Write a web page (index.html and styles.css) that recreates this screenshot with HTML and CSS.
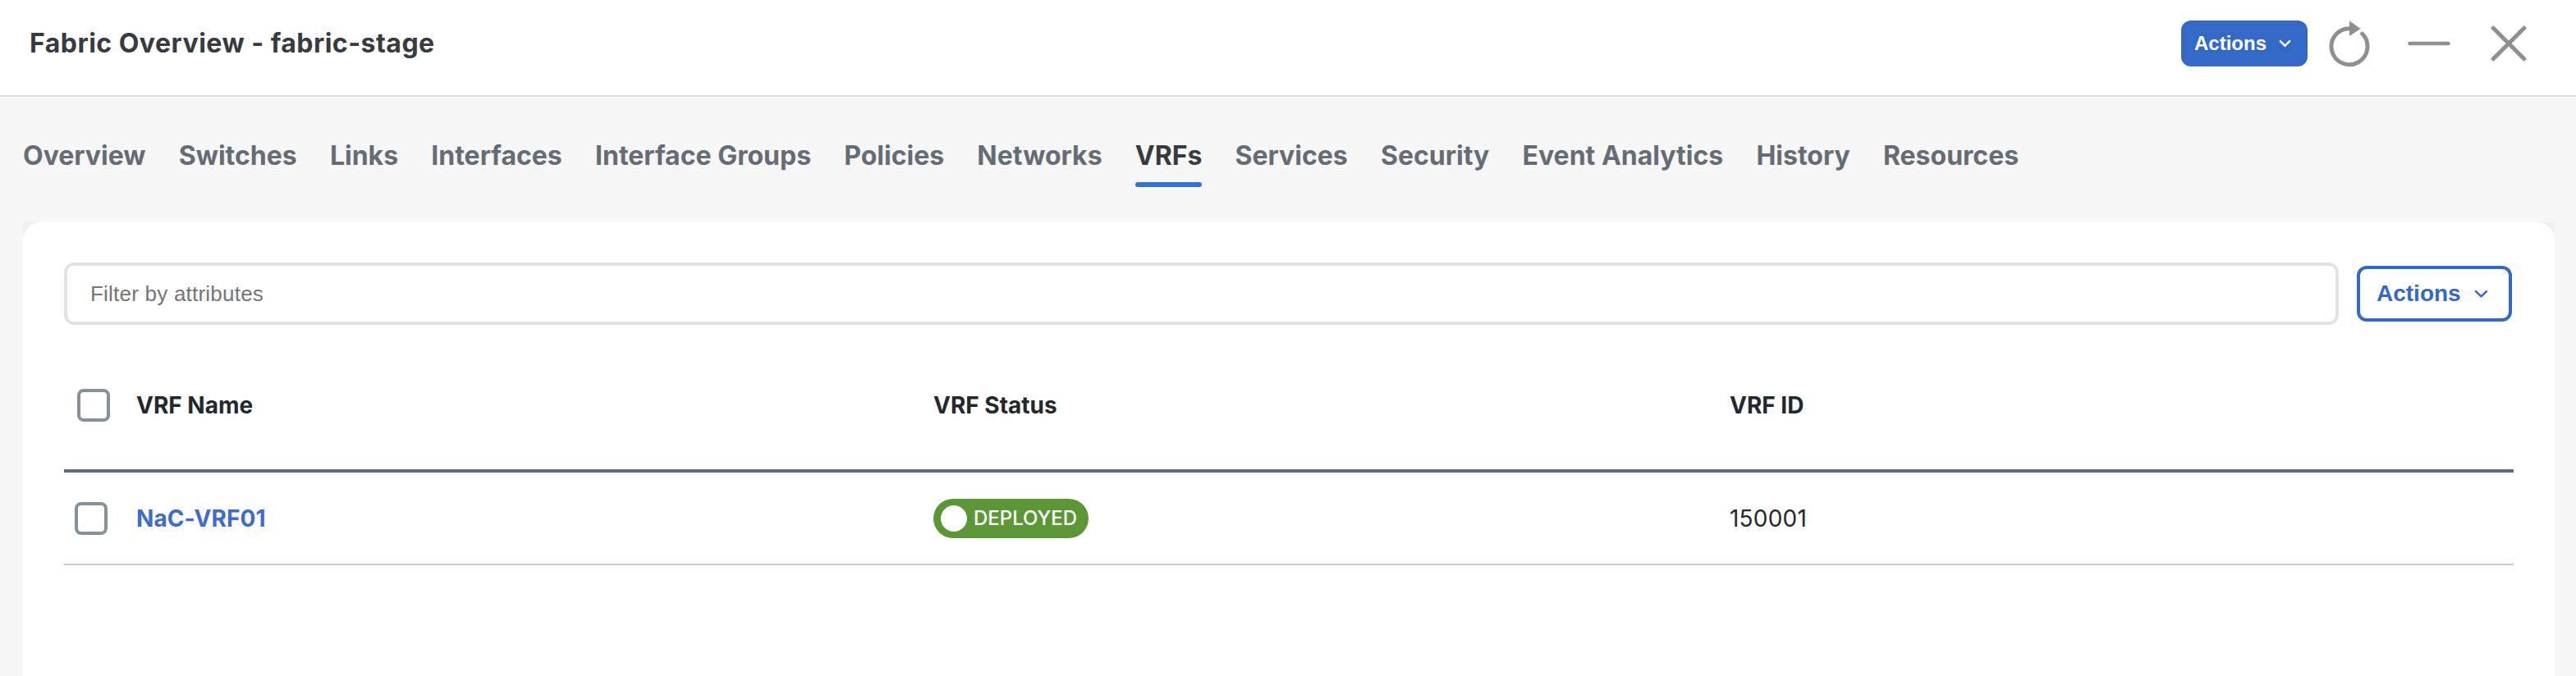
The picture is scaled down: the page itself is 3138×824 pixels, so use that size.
FILE: index.html
```html
<!DOCTYPE html>
<html lang="en">
<head>
<meta charset="utf-8">
<title>Fabric Overview - fabric-stage</title>
<link rel="stylesheet" href="styles.css">
</head>
<body>
<header class="header">
  <h1 class="title">Fabric Overview - fabric-stage</h1>
  <button class="btn btn-primary">Actions
    <svg width="16" height="10" viewBox="0 0 16 10"><path d="M2 2l6 6 6-6"/></svg>
  </button>
  <svg class="icon refresh" width="50" height="58" viewBox="0 0 50 58"><path d="M25 9.700a22 22 0 1 0 15.500 6.400"/><path class="solid" d="M25 0.500l13.500 9.500L25 19z"/></svg>
  <svg class="icon minimize" width="52" height="6" viewBox="0 0 52 6"><path d="M2.500 3h47"/></svg>
  <svg class="icon close" width="44" height="44" viewBox="0 0 44 44"><path d="M3.200 3.200l37.600 37.600M40.800 3.200L3.200 40.800"/></svg>
</header>
<nav class="tabs">
  <a class="tab">Overview</a>
  <a class="tab">Switches</a>
  <a class="tab">Links</a>
  <a class="tab">Interfaces</a>
  <a class="tab">Interface Groups</a>
  <a class="tab">Policies</a>
  <a class="tab">Networks</a>
  <a class="tab active">VRFs</a>
  <a class="tab">Services</a>
  <a class="tab">Security</a>
  <a class="tab">Event Analytics</a>
  <a class="tab">History</a>
  <a class="tab">Resources</a>
</nav>
<div class="panel-wrap">
<main class="panel">
  <div class="toolbar">
    <input class="filter" type="text" placeholder="Filter by attributes">
    <button class="btn btn-outline">Actions
      <svg width="18" height="11" viewBox="0 0 18 11"><path d="M2.200 2l6.800 6.600L15.800 2"/></svg>
    </button>
  </div>
  <div class="row row-head">
    <span class="check"></span>
    <span>VRF Name</span>
    <span>VRF Status</span>
    <span>VRF ID</span>
  </div>
  <div class="row row-body">
    <span class="check"></span>
    <a class="link">NaC-VRF01</a>
    <span class="badge"><i class="dot"></i><span class="badge-text">DEPLOYED</span></span>
    <span class="vrf-id">150001</span>
  </div>
</main>
</div>
</body>
</html>
```
FILE: styles.css
```css
* { box-sizing: border-box; }
body {
  margin: 0;
  height: 824px;
  overflow: hidden;
  display: flex;
  flex-direction: column;
  background: #f7f7f7;
  color: #23282e;
  font-family: Inter, "Liberation Sans", sans-serif;
}
.header {
  height: 118px;
  flex: none;
  display: flex;
  align-items: flex-start;
  padding: 25px 60px 0 36px;
  background: #fff;
  border-bottom: 2px solid #dedede;
}
.title {
  flex: 1;
  margin: 8px 0 0;
  font-size: 32px;
  line-height: 40px;
  font-weight: 700;
  letter-spacing: 0.48px;
  color: #373a40;
}
.btn {
  display: flex;
  align-items: center;
  border-radius: 12px;
  font-family: "Liberation Sans", Arial, sans-serif;
  font-weight: 700;
}
.btn svg {
  fill: none;
  stroke: currentColor;
  stroke-width: 2.7;
  stroke-linecap: round;
  stroke-linejoin: round;
}
.btn-primary {
  width: 154px;
  height: 56px;
  padding: 0 0 0 16px;
  gap: 15px;
  border: 0;
  background: #3468c6;
  color: #fff;
  font-size: 24px;
}
.btn-primary svg { width: 15px; }
.icon {
  flex: none;
  fill: none;
  stroke: #8f8f8f;
  stroke-width: 5;
  stroke-linecap: round;
}
.icon .solid { fill: #8f8f8f; stroke: none; }
.refresh { margin-left: 26px; }
.minimize { margin: 25px 0 0 46px; stroke-width: 4.5; }
.close { margin: 6px 0 0 49px; }
.tabs {
  flex: none;
  height: 152px;
  display: flex;
  align-items: flex-start;
  gap: 40.2px;
  padding: 52px 28px 0;
}
.tab {
  height: 58px;
  font-size: 32px;
  line-height: 40px;
  font-weight: 700;
  color: #656c75;
  white-space: nowrap;
}
.tab.active {
  display: flex;
  flex-direction: column;
  justify-content: space-between;
  color: #373a40;
}
.tab.active::after {
  content: "";
  height: 6px;
  border-radius: 3px;
  background: #3273d3;
}
.panel-wrap {
  flex: 1;
  margin: 0 26px 0 28px;
  background: linear-gradient(#f0f0f0, #f7f7f7 40px);
}
.panel {
  height: 100%;
  padding: 50px 50px 0;
  border-radius: 24px 24px 0 0;
  background: #fff;
}
.toolbar { display: flex; align-items: center; gap: 22px; margin-right: 2px; }
.filter {
  flex: 1;
  height: 76px;
  padding: 0 28px;
  border: 4px solid #e2e3e7;
  border-radius: 12px;
  background: #fff;
  font: 26px "Liberation Sans", Arial, sans-serif;
  letter-spacing: 0.22px;
}
.filter::placeholder { color: #757575; }
.btn-outline {
  width: 189px;
  height: 68px;
  padding: 0 0 0 20px;
  gap: 16px;
  border: 4px solid #3468c6;
  background: #fff;
  color: #3468c6;
  font-size: 28px;
}
.btn-outline svg { width: 17px; }
.row {
  display: grid;
  grid-template-columns: 88px 971px 970px 1fr;
  align-items: center;
  font-size: 28px;
  line-height: 36px;
}
.row-head {
  height: 180px;
  padding-top: 20px;
  border-bottom: 4px solid #646c74;
  font-weight: 700;
}
.row-head .check { margin-left: 16px; }
.row-body {
  height: 113px;
  padding-bottom: 1px;
  border-top: 2px solid #f2f2f2;
  border-bottom: 2px solid #c8c8c8;
}
.check {
  width: 40px;
  height: 40px;
  margin-left: 13px;
  border: 4px solid #889099;
  border-radius: 8px;
}
.link { font-weight: 700; letter-spacing: 0.1px; color: #3f6bcd; }
.vrf-id { letter-spacing: 0.2px; }
.badge {
  display: flex;
  align-items: center;
  gap: 8px;
  width: 189px;
  height: 48px;
  padding-left: 9px;
  border-radius: 24px;
  background: #5c9637;
  color: #fff;
  font-size: 24px;
  font-weight: 500;
}
.dot { width: 32px; height: 32px; border-radius: 50%; background: #fff; }
```
